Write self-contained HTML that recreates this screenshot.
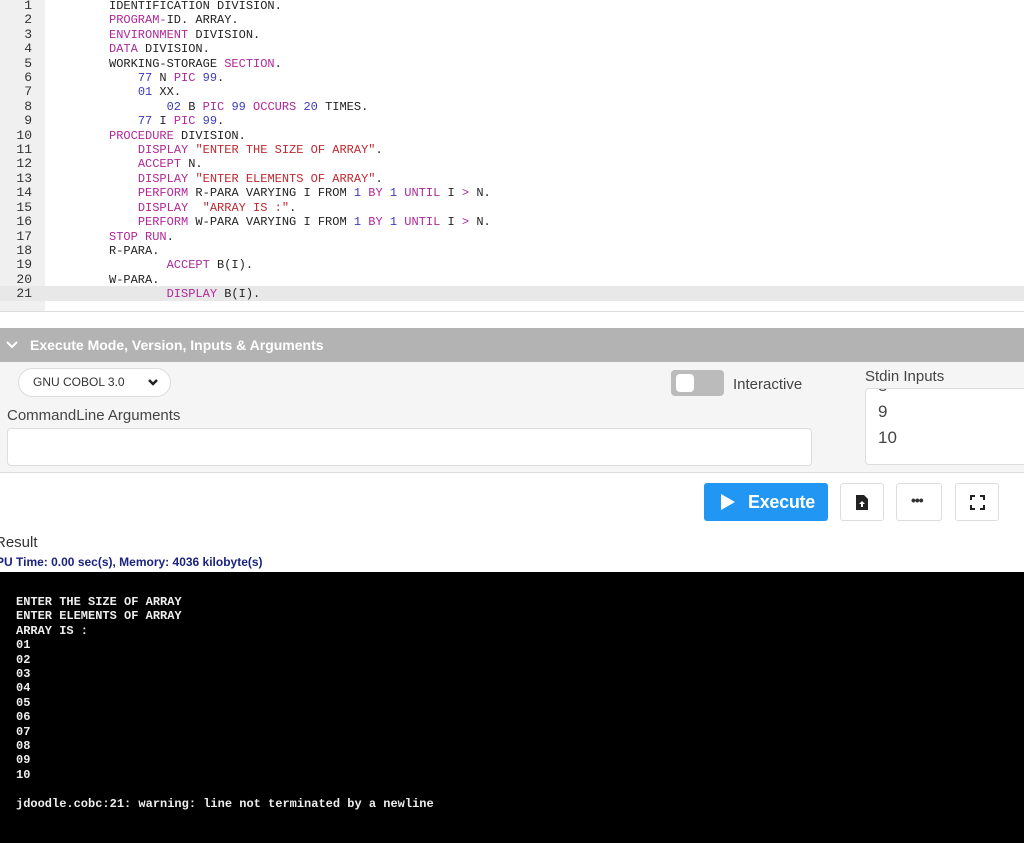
<!DOCTYPE html>
<html><head><meta charset="utf-8"><style>
*{margin:0;padding:0;box-sizing:border-box}
body{width:1024px;height:843px;overflow:hidden;background:#fff;position:relative;font-family:"Liberation Sans",sans-serif}
.gut{position:absolute;left:0;top:0;width:45px;height:312px;background:#f0f0f0}
.code{position:absolute;left:0;top:-1px;font:12px/14.4px "Liberation Mono",monospace;color:#222;white-space:pre}
.ln{display:inline-block;width:32px;text-align:right;color:#333;margin-right:77px;font-size:13px}
.k{color:#b0279a}.n{color:#3a3ac0}.s{color:#c0282f}
.act{position:absolute;left:0;top:286px;width:1024px;height:15px;background:#e8e8e8}
.sep{position:absolute;left:0;top:311px;width:1024px;height:1px;background:#ddd}
.bar{position:absolute;left:0;top:328px;width:1024px;height:34px;background:#b3b3b3;color:#fff;font-size:14px;font-weight:bold;line-height:34px;padding-left:30px}
.panel{position:absolute;left:0;top:362px;width:1024px;height:111px;background:#f5f5f5;border-bottom:1px solid #ddd}
.sel{position:absolute;left:18px;top:368px;width:153px;height:29px;border:1px solid #ddd;border-radius:15px;background:#fff;font-size:12px;line-height:27px;padding-left:14px;color:#333}
.lbl{position:absolute;font-size:15px;color:#444}
.inp{position:absolute;left:7px;top:428px;width:805px;height:38px;background:#fff;border:1px solid #ddd;border-radius:4px}
.tog{position:absolute;left:671px;top:370px;width:53px;height:26px;background:#bbb;border-radius:4px}
.tog i{position:absolute;left:5px;top:4px;width:18px;height:18px;background:#fff;border-radius:4px}
.std{position:absolute;left:865px;top:388px;width:170px;height:77px;background:#fff;border:1px solid #ddd;border-radius:4px;font-size:17px;color:#444;padding-left:12px;line-height:26px;overflow:hidden}
.exe{position:absolute;left:704px;top:483px;width:124px;height:38px;background:#2196f3;border-radius:3px;color:#fff;font-weight:bold;font-size:18px;line-height:38px;padding-left:44px;letter-spacing:-0.3px}
.ib{position:absolute;top:483px;width:44px;height:38px;border:1px solid #ddd;border-radius:3px;background:#fff}
.term{position:absolute;left:0;top:572px;width:1024px;height:271px;background:#000;color:#eee;font:bold 12px/14.4px "Liberation Mono",monospace;white-space:pre;padding:23px 0 0 16px}
</style></head><body>
<div class="gut"></div><div class="act"></div>
<div class="code"><span class="ln">1</span>IDENTIFICATION DIVISION.
<span class="ln">2</span><span class="k">PROGRAM-</span>ID. ARRAY.
<span class="ln">3</span><span class="k">ENVIRONMENT</span> DIVISION.
<span class="ln">4</span><span class="k">DATA</span> DIVISION.
<span class="ln">5</span>WORKING-STORAGE <span class="k">SECTION</span>.
<span class="ln">6</span>    <span class="n">77</span> N <span class="k">PIC</span> <span class="n">99</span>.
<span class="ln">7</span>    <span class="n">01</span> XX.
<span class="ln">8</span>        <span class="n">02</span> B <span class="k">PIC</span> <span class="n">99</span> <span class="k">OCCURS</span> <span class="n">20</span> TIMES.
<span class="ln">9</span>    <span class="n">77</span> I <span class="k">PIC</span> <span class="n">99</span>.
<span class="ln">10</span><span class="k">PROCEDURE</span> DIVISION.
<span class="ln">11</span>    <span class="k">DISPLAY</span> <span class="s">"ENTER THE SIZE OF ARRAY"</span>.
<span class="ln">12</span>    <span class="k">ACCEPT</span> N.
<span class="ln">13</span>    <span class="k">DISPLAY</span> <span class="s">"ENTER ELEMENTS OF ARRAY"</span>.
<span class="ln">14</span>    <span class="k">PERFORM</span> R-PARA VARYING I FROM <span class="n">1</span> <span class="k">BY</span> <span class="n">1</span> <span class="k">UNTIL</span> I <span class="k">&gt;</span> N.
<span class="ln">15</span>    <span class="k">DISPLAY</span>  <span class="s">"ARRAY IS :"</span>.
<span class="ln">16</span>    <span class="k">PERFORM</span> W-PARA VARYING I FROM <span class="n">1</span> <span class="k">BY</span> <span class="n">1</span> <span class="k">UNTIL</span> I <span class="k">&gt;</span> N.
<span class="ln">17</span><span class="k">STOP</span> <span class="k">RUN</span>.
<span class="ln">18</span>R-PARA.
<span class="ln">19</span>        <span class="k">ACCEPT</span> B(I).
<span class="ln">20</span>W-PARA.
<span class="ln">21</span>        <span class="k">DISPLAY</span> B(I).</div>
<div class="sep"></div>
<div class="bar"><svg style="position:absolute;left:6px;top:13px" width="12" height="8" viewBox="0 0 12 8"><path d="M1 1l5 5 5-5" stroke="#fff" stroke-width="2" fill="none"/></svg>Execute Mode, Version, Inputs &amp; Arguments</div>
<div class="panel"></div>
<div class="sel">GNU COBOL 3.0<svg style="position:absolute;left:129px;top:10px" width="10" height="8" viewBox="0 0 10 8"><path d="M1 1l4 4 4-4" stroke="#222" stroke-width="2.5" fill="none"/></svg></div>
<div class="tog"><i></i></div>
<div class="lbl" style="left:733px;top:376px">Interactive</div>
<div class="lbl" style="left:865px;top:368px">Stdin Inputs</div>
<div class="lbl" style="left:7px;top:407px">CommandLine Arguments</div>
<div class="inp"></div>
<div class="std"><div style="margin-top:-16px">8</div><div>9</div><div>10</div></div>
<div class="exe"><svg style="position:absolute;left:16px;top:10px" width="16" height="18" viewBox="0 0 16 18"><path d="M1 1L15 9 1 17z" fill="#fff"/></svg>Execute</div>
<div class="ib" style="left:840px"><svg style="position:absolute;left:15px;top:11px" width="12" height="15" viewBox="0 0 12 15"><path d="M0 0h8l4 4v11H0z" fill="#222"/><path d="M6 6l3 3H7v3H5V9H3z" fill="#fff"/></svg></div>
<div class="ib" style="left:896px;width:46px"><span style="position:absolute;left:14px;top:8px;font-size:14px;font-weight:bold;letter-spacing:-1px;color:#333">•••</span></div>
<div class="ib" style="left:955px"><svg style="position:absolute;left:14px;top:11px" width="15" height="15" viewBox="0 0 15 15" fill="none" stroke="#222" stroke-width="2"><path d="M1 5V1h4M10 1h4v4M14 10v4h-4M5 14H1v-4"/></svg></div>
<div class="lbl" style="left:-5px;top:534px;color:#333">Result</div>
<div style="position:absolute;left:-4px;top:555px;font-size:12px;font-weight:bold;color:#1a237e">PU Time: 0.00 sec(s), Memory: 4036 kilobyte(s)</div>
<div class="term">ENTER THE SIZE OF ARRAY
ENTER ELEMENTS OF ARRAY
ARRAY IS :
01
02
03
04
05
06
07
08
09
10

jdoodle.cobc:21: warning: line not terminated by a newline</div>
</body></html>
